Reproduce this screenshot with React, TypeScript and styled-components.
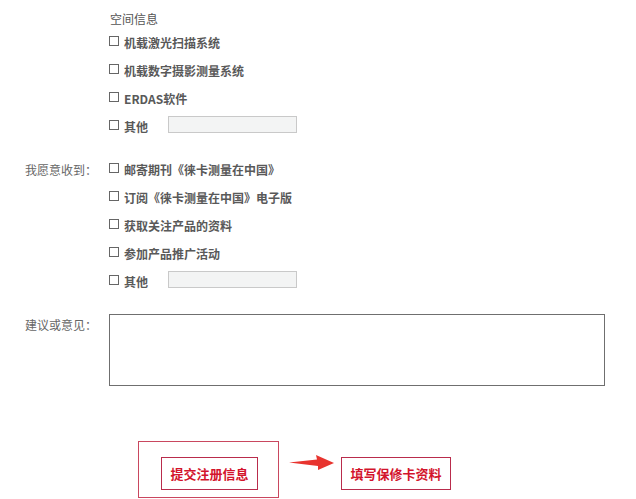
import React from "react";
import styled, { createGlobalStyle } from "styled-components";

const Global = createGlobalStyle`
  html, body { margin: 0; padding: 0; background: #fff; }
  body { font-family: "Noto Sans CJK SC", "Liberation Sans", sans-serif; font-size: 12px; color: #555; }
`;

const Page = styled.div`
  width: 636px;
  height: 499px;
  overflow: hidden;
  padding: 8px 0 0 25px;
  box-sizing: border-box;
`;

const Section = styled.div<{ $gap?: number }>`
  display: grid;
  grid-template-columns: 84px 1fr;
  margin-top: ${(p) => p.$gap ?? 0}px;
`;

const Label = styled.div<{ $top?: number }>`
  color: #666;
  font-size: 12px;
  line-height: 28px;
  margin-top: ${(p) => p.$top ?? 0}px;
  white-space: nowrap;
`;

const Column = styled.div`
  display: flex;
  flex-direction: column;
`;

const Title = styled.div`
  color: #555;
  font-size: 12px;
  line-height: 21px;
  padding-left: 1px;
`;

const OptionRow = styled.label`
  display: flex;
  align-items: center;
  height: 28px;
  box-sizing: border-box;
  padding-bottom: 2px;
  font-weight: 700;
  color: #595959;
  font-size: 12px;
`;

const Box = styled.input.attrs({ type: "checkbox" })`
  appearance: none;
  width: 10px;
  height: 10px;
  border: 1px solid #666;
  background: #fff;
  margin: -2px 5px 0 0;
  box-sizing: border-box;
`;

const OtherText = styled.span`
  width: 44px;
`;

const OtherInput = styled.input`
  width: 129px;
  height: 17px;
  box-sizing: border-box;
  border: 1px solid #c9c9c9;
  background: #f3f4f4;
  margin-top: -3px;
  padding: 0;
`;

const TextArea = styled.textarea`
  width: 496px;
  height: 72px;
  box-sizing: border-box;
  border: 1px solid #6f6f6f;
  resize: none;
  padding: 0;
  font-family: inherit;
`;

const Actions = styled.div`
  display: flex;
  align-items: flex-start;
  margin: 55px 0 0 113px;
`;

const Frame = styled.div`
  width: 141px;
  height: 57px;
  box-sizing: border-box;
  border: 1px solid #c9475f;
  padding: 15px 0 0 22px;
`;

const Button = styled.button<{ $w: number }>`
  width: ${(p) => p.$w}px;
  height: 33px;
  box-sizing: border-box;
  border: 1px solid #b92c4c;
  background: #fff;
  color: #d3142c;
  font-family: "Noto Sans CJK SC", sans-serif;
  font-weight: 700;
  font-size: 13px;
  letter-spacing: 0;
  padding: 0;
  cursor: pointer;
`;

const ArrowWrap = styled.div`
  margin: 14px 0 0 10px;
  width: 45px;
  height: 15px;
`;

const RightSlot = styled.div`
  margin: 16px 0 0 7px;
`;

const Arrow = () => (
  <svg width="45" height="15" viewBox="0 0 45 15">
    <path d="M0 7.5 L28 4.5 L27 0 L45 8 L29 15 L29 11 Z" fill="#e8342f" />
  </svg>
);

const Option = ({ text }: { text: string }) => (
  <OptionRow>
    <Box />
    {text}
  </OptionRow>
);

const Other = () => (
  <OptionRow>
    <Box />
    <OtherText>其他</OtherText>
    <OtherInput />
  </OptionRow>
);

export default function App() {
  return (
    <Page>
      <Global />
      <Section>
        <Label />
        <Column>
          <Title>空间信息</Title>
          <Option text="机载激光扫描系统" />
          <Option text="机载数字摄影测量系统" />
          <Option text="ERDAS软件" />
          <Other />
        </Column>
      </Section>
      <Section $gap={15}>
        <Label>我愿意收到：</Label>
        <Column>
          <Option text="邮寄期刊《徕卡测量在中国》" />
          <Option text="订阅《徕卡测量在中国》电子版" />
          <Option text="获取关注产品的资料" />
          <Option text="参加产品推广活动" />
          <Other />
        </Column>
      </Section>
      <Section $gap={18}>
        <Label $top={-3}>建议或意见：</Label>
        <TextArea />
      </Section>
      <Actions>
        <Frame>
          <Button $w={97}>提交注册信息</Button>
        </Frame>
        <ArrowWrap>
          <Arrow />
        </ArrowWrap>
        <RightSlot>
          <Button $w={110}>填写保修卡资料</Button>
        </RightSlot>
      </Actions>
    </Page>
  );
}
